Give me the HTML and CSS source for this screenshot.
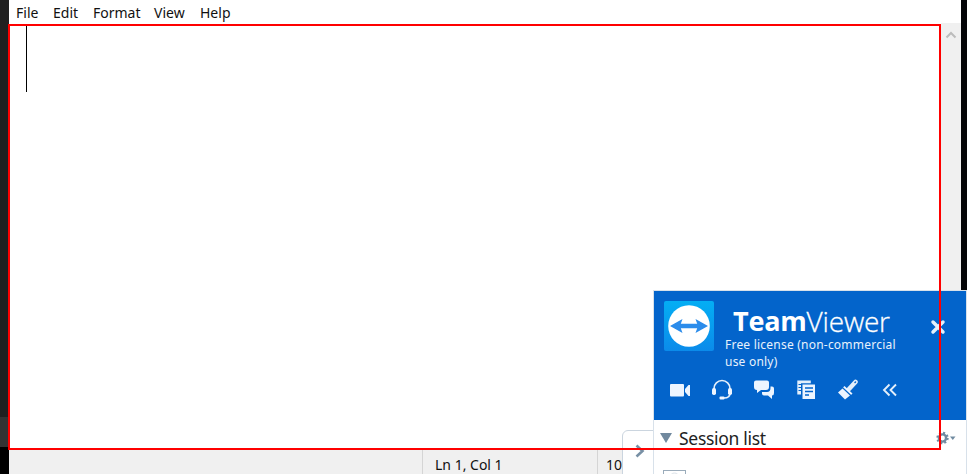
FILE: index.html
```html
<!DOCTYPE html>
<html lang="en">
<head>
<meta charset="utf-8">
<title>Notepad</title>
<link rel="stylesheet" href="styles.css">
</head>
<body>
<div class="desktop">
  <div class="edge-left"><div class="edge-mid"></div><div class="edge-low"></div></div>
  <main class="window">
    <nav class="menu"><span>File</span><span>Edit</span><span>Format</span><span>View</span><span>Help</span></nav>
    <div class="body">
      <div class="editor"><div class="caret"></div></div>
      <div class="scrollbar"><svg width="12" height="8" viewBox="0 0 12 8"><path d="M1.500 6.500 6 2l4.500 4.500" fill="none" stroke="#bcbcbc" stroke-width="2"/></svg></div>
    </div>
    <footer class="status"><span class="position">Ln 1, Col 1</span><span class="zoom">10</span></footer>
  </main>
  <div class="edge-right"></div>
</div>
<div class="tab"><svg width="10" height="14" viewBox="0 0 10 14"><path d="m1.500 1.500 6 5.500-6 5.500" fill="none" stroke="#7890a5" stroke-width="2.600"/></svg></div>
<aside class="panel">
  <header class="panel-head">
    <div class="brand-row">
      <svg class="logo" width="50" height="50" viewBox="0 0 50 50">
        <defs><linearGradient id="sky" x2="0" y2="1"><stop stop-color="#04aef4"/><stop offset="1" stop-color="#0b8bea"/></linearGradient></defs>
        <rect width="50" height="50" rx="2" fill="url(#sky)"/>
        <circle cx="25" cy="25" r="20.800" fill="#fff"/>
        <path d="m6 25 12.500-7-1.700 4.800h16.400L31.500 18 44 25l-12.500 7 1.700-4.800H16.800l1.700 4.800z" fill="#2b8ceb"/>
      </svg>
      <div class="brand">
        <div class="name"><b>Team</b><span>Viewer</span></div>
        <div class="license">Free license (non-commercial<br>use only)</div>
      </div>
      <svg class="close" width="16" height="16" viewBox="0 0 16 16"><path d="m3 3 10 10M13 3 3 13" stroke="#e5f0fa" stroke-width="3.500" stroke-linecap="round"/></svg>
    </div>
    <div class="tools">
      <svg width="22" height="22" viewBox="0 0 22 22" fill="#edf5ff"><rect x="1" y="5" width="14" height="12.500" rx="1"/><path d="m16 10 3.500-4H21v11h-1.500L16 13z"/></svg>
      <svg width="22" height="22" viewBox="0 0 22 22"><path d="M3 11V9.500a8 8 0 0 1 16 0V14q0 5-6 5" fill="none" stroke="#e4effb" stroke-width="1.600"/><rect x="1" y="9" width="4" height="7" rx="1.700" fill="#edf5ff"/><rect x="17" y="9" width="4" height="7" rx="1.700" fill="#edf5ff"/><rect x="8.500" y="17.500" width="5" height="3" rx="1" fill="#edf5ff"/></svg>
      <svg width="22" height="22" viewBox="0 0 22 22" fill="#edf5ff"><path d="M3 1.500h11q2 0 2 2V8q0 3-3 3H8l-4 3v-3q-3 0-3-3V3.500q0-2 2-2z"/><path d="M17.500 7.500H19q2 0 2 2V14q0 2.500-2 2.500V20l-4-3.500h-4q-2 0-2-2V13h5q3.500 0 3.500-4z"/></svg>
      <svg width="22" height="22" viewBox="0 0 22 22"><path d="M2.300 1.500h13.500v2.700H6v11.300H2.300z" fill="#e3effb"/><path d="M3.500 5.500H6M3.500 8.500H6M3.500 11.500H6" stroke="#0364cb"/><path d="M7.500 5.500H20V20H7.500z" fill="#edf5ff"/><path d="M10 9h8M10 12.500h8M10 16h4" stroke="#0364cb" stroke-width="1.400"/></svg>
      <svg width="22" height="22" viewBox="0 0 22 22"><path d="m12 10 6.500-7" stroke="#e4effb" stroke-width="4.500" stroke-linecap="round"/><path d="m18 3.500.5-.5" stroke="#0364cb" stroke-width="1.500" stroke-linecap="round"/><path d="m7.500 7 8 7.500-1.500 1.500-8-7.500z" fill="#edf5ff"/><path d="m5.500 9.500 7.500 7-5 4-2-2-1-1-1-1-3-3z" fill="#edf5ff"/><path d="m6 8.800 7.800 7.300" stroke="#0364cb" stroke-width=".7"/></svg>
      <svg width="22" height="22" viewBox="0 0 22 22"><path d="m10.500 5.500-5.500 5.500 5.500 5.500M17 5.500 11.500 11l5.500 5.500" fill="none" stroke="#e4effb" stroke-width="1.900"/></svg>
    </div>
  </header>
  <section class="session">
    <div class="session-head">
      <svg width="12" height="10" viewBox="0 0 12 10"><path d="M0 0h12L6 10z" fill="#71899e"/></svg>
      <span class="session-title">Session list</span>
      <svg class="gear" width="20" height="14" viewBox="0 0 20 14"><circle cx="6.500" cy="7" r="3.600" fill="none" stroke="#718ba1" stroke-width="2.400"/><circle cx="6.500" cy="7" r="5.100" fill="none" stroke="#718ba1" stroke-width="2.200" stroke-dasharray="2 2"/><path d="M14 5.500h5.500L16.800 9z" fill="#718ba1"/></svg>
    </div>
    <svg class="avatar" width="23" height="14" viewBox="0 0 23 14"><rect x=".5" y=".5" width="22" height="20" fill="#fff" stroke="#9bacbb"/><ellipse cx="11.500" cy="7" rx="4.500" ry="4" fill="#fafbfc" stroke="#dce2e8"/></svg>
  </section>
</aside>
<div class="selection"></div>
</body>
</html>
```
FILE: styles.css
```css
* { box-sizing: border-box; }
body { margin: 0; width: 970px; height: 474px; position: relative; overflow: hidden; background: #fff; color: #111; font-family: "Noto Sans", "Open Sans", sans-serif; white-space: nowrap; }
svg { display: block; flex: none; }
.desktop { display: grid; grid-template-columns: 9px 952px 6px; height: 474px; }
.edge-left { background: #202020; padding-top: 417px; }
.edge-mid { height: 30px; background: #333; }
.edge-low { height: 27px; background: #000; }
.edge-right { background: #030406; }
.window { display: flex; flex-direction: column; background: #fff; }
.menu { height: 24px; display: grid; grid-template-columns: 37px 40px 61px 46px 40px; padding-left: 7px; font-size: 14px; line-height: 26px; }
.body { flex: 1; display: flex; }
.editor { flex: 1; padding: 2px 0 0 17px; }
.caret { width: 1px; height: 66px; background: #000; }
.scrollbar { width: 20px; margin-top: -1px; padding: 8px 0 0 4px; background: #f0f0f0; }
.status { height: 24px; display: flex; background: #f0f0f0; font-size: 14px; line-height: 29px; }
.position { margin-left: 413px; width: 175px; padding-left: 12px; border-left: 1px solid #d5d5d5; }
.zoom { border-left: 1px solid #d5d5d5; padding-left: 8px; }
.tab { position: absolute; left: 622px; top: 430px; width: 33px; height: 50px; border: 1px solid #cbd5df; border-radius: 6px 0 0; background: #fff; padding: 13px 0 0 12px; }
.panel { position: absolute; left: 653px; top: 290px; width: 314px; height: 184px; background: #fff; border: 1px solid #d8e1ea; border-bottom: 0; }
.panel-head { height: 129px; background: #0364cb; color: #fff; padding: 10px 0 0 10px; }
.brand-row { display: flex; height: 78px; }
.brand { width: 195px; padding-left: 11px; }
.name { height: 35px; padding: 5px 0 0 8px; display: flex; }
.name b { font: 700 27px/30px "Open Sans", sans-serif; letter-spacing: -.2px; }
.name span { font: 300 28px/30px "Open Sans", sans-serif; letter-spacing: -.2px; -webkit-text-stroke: .3px #fff; }
.license { font-size: 12px; line-height: 17px; letter-spacing: .22px; color: #e8f2fc; }
.close { margin: 18px 0 0 21px; }
.tools { display: grid; grid-template-columns: repeat(6, 42px); padding-left: 5px; }
.session { padding-left: 6px; }
.session-head { display: flex; height: 50px; padding-top: 5px; }
.session-head > svg:first-child { margin-top: 8px; }
.session-title { width: 257px; margin-left: 7px; font-size: 17.500px; letter-spacing: -.3px; line-height: 27px; color: #222; }
.gear { margin-top: 6px; }
.avatar { margin-left: 3px; }
.selection { position: absolute; left: 8px; top: 24px; width: 933px; height: 426px; border: 2px solid #f00; }
```
